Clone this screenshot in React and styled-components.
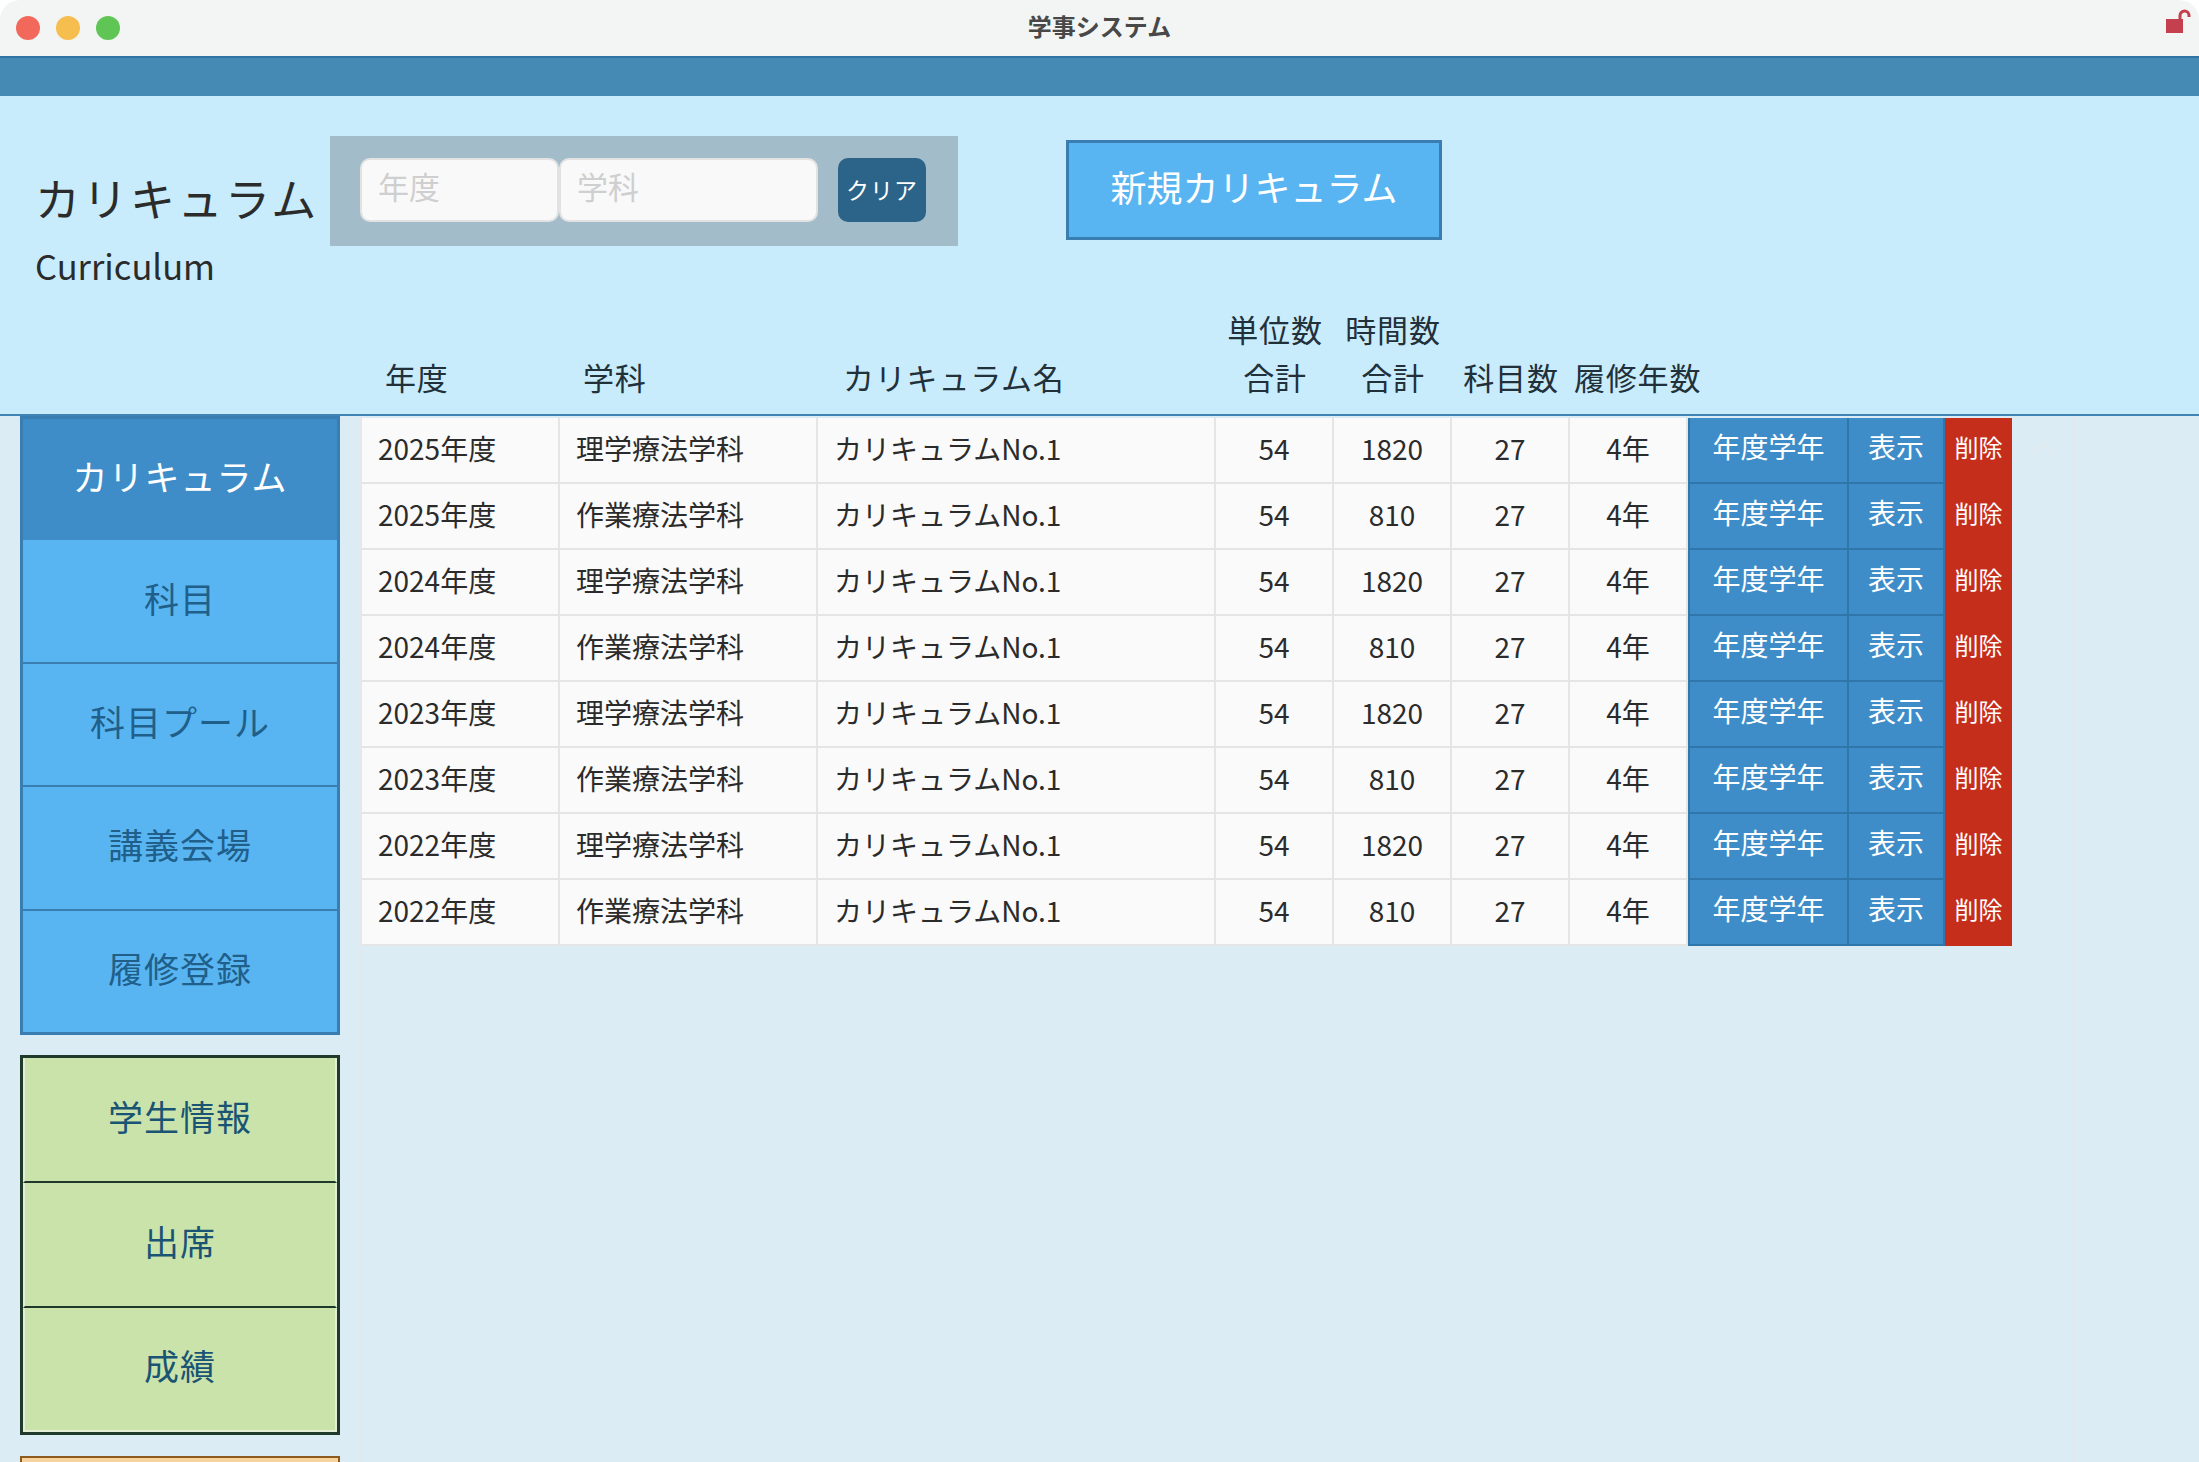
import React from 'react';
import styled, { createGlobalStyle } from 'styled-components';

const rows = [
  ['2025年度', '理学療法学科', 1820],
  ['2025年度', '作業療法学科', 810],
  ['2024年度', '理学療法学科', 1820],
  ['2024年度', '作業療法学科', 810],
  ['2023年度', '理学療法学科', 1820],
  ['2023年度', '作業療法学科', 810],
  ['2022年度', '理学療法学科', 1820],
  ['2022年度', '作業療法学科', 810],
];

const blueMenu = ['カリキュラム', '科目', '科目プール', '講義会場', '履修登録'];
const greenMenu = ['学生情報', '出席', '成績'];

const App = () => (
  <Window>
    <GlobalStyle />
    <TitleBar>
      <Lights>
        <Light $color="#f2695c" />
        <Light $color="#f6be4f" />
        <Light $color="#5fc554" />
      </Lights>
      <WindowTitle>学事システム</WindowTitle>
      <LockIcon viewBox="0 0 26 24" width="26" height="24">
        <rect x="0" y="10" width="17" height="14" fill="#c5404f" />
        <path d="M14 11V6.5a4.5 4.5 0 0 1 9 0V8" fill="none" stroke="#c5404f" strokeWidth="3" />
      </LockIcon>
    </TitleBar>
    <BlueBar />
    <Header>
      <TopRow>
        <TitleBlock>
          <PageTitle>カリキュラム</PageTitle>
          <PageSubtitle>Curriculum</PageSubtitle>
        </TitleBlock>
        <SearchPanel>
          <SearchInput $width={199} placeholder="年度" />
          <SearchInput $width={259} placeholder="学科" />
          <ClearButton>クリア</ClearButton>
        </SearchPanel>
        <NewButton>新規カリキュラム</NewButton>
      </TopRow>
      <HeadRow>
        <HeadCell $pad={23}>年度</HeadCell>
        <HeadCell $pad={23}>学科</HeadCell>
        <HeadCell $pad={25}>カリキュラム名</HeadCell>
        <HeadCell $center>単位数<br />合計</HeadCell>
        <HeadCell $center>時間数<br />合計</HeadCell>
        <HeadCell $center>科目数</HeadCell>
        <HeadCell $pad={4}>履修年数</HeadCell>
      </HeadRow>
    </Header>
    <Body>
      <Sidebar>
        <BlueGroup>
          {blueMenu.map((label, i) => (
            <BlueItem key={label} $active={i === 0}>{label}</BlueItem>
          ))}
        </BlueGroup>
        <GreenGroup>
          {greenMenu.map(label => (
            <GreenItem key={label}>{label}</GreenItem>
          ))}
        </GreenGroup>
        <OrangeGroup />
      </Sidebar>
      <Main>
        <ScrollTop viewBox="0 0 24 12" width="24" height="12">
          <path d="M1 11.5 12 1l11 10.5" fill="none" stroke="#e3ebef" strokeWidth="2" />
        </ScrollTop>
        {rows.map(([year, dept, hours], i) => (
          <Row key={i}>
            <Cell $pad>{year}</Cell>
            <Cell $pad>{dept}</Cell>
            <Cell $pad>カリキュラムNo.1</Cell>
            <Cell>54</Cell>
            <Cell>{hours}</Cell>
            <Cell>27</Cell>
            <Cell>4年</Cell>
            <ActionButton>年度学年</ActionButton>
            <ActionButton>表示</ActionButton>
            <DeleteButton>削除</DeleteButton>
          </Row>
        ))}
      </Main>
    </Body>
  </Window>
);
export default App;

const GlobalStyle = createGlobalStyle`
  html, body {
    margin: 0;
    padding: 0;
    background: #fff;
    font-family: "Noto Sans CJK JP", "Noto Sans", sans-serif;
  }
  * {
    box-sizing: border-box;
  }
`;

const Window = styled.div`
  height: 1462px;
  overflow: hidden;
  display: flex;
  flex-direction: column;
`;

const TitleBar = styled.div`
  height: 58px;
  flex: none;
  position: relative;
  display: flex;
  align-items: center;
  justify-content: center;
  background: #f3f5f4;
  border-bottom: 2px solid #2f74a5;
  border-radius: 20px 20px 0 0;
`;

const Lights = styled.div`
  position: absolute;
  left: 16px;
  top: 16px;
  display: flex;
  gap: 16px;
`;

const Light = styled.span`
  width: 24px;
  height: 24px;
  border-radius: 50%;
  background: ${({ $color }) => $color};
`;

const WindowTitle = styled.div`
  font-size: 24px;
  font-weight: 700;
  color: #484848;
  line-height: 54px;
  margin-bottom: 4px;
`;

const LockIcon = styled.svg`
  position: absolute;
  left: 2166px;
  top: 9px;
`;

const BlueBar = styled.div`
  height: 38px;
  flex: none;
  background: #4589b5;
`;

const Header = styled.header`
  height: 320px;
  flex: none;
  display: flex;
  flex-direction: column;
  background: #c8ecfc;
  border-bottom: 2px solid #3f84b5;
`;

const TopRow = styled.div`
  display: flex;
  align-items: flex-start;
  padding-top: 40px;
`;

const TitleBlock = styled.div`
  width: 330px;
  padding: 34px 0 0 35px;
  color: #2b2b2b;
`;

const PageTitle = styled.h1`
  margin: 0;
  font-size: 45px;
  font-weight: 400;
  letter-spacing: 2.5px;
  line-height: 56px;
  white-space: nowrap;
`;

const PageSubtitle = styled.div`
  margin-top: 14px;
  font-size: 34.5px;
  line-height: 50px;
`;

const SearchPanel = styled.div`
  width: 628px;
  height: 110px;
  display: flex;
  align-items: flex-start;
  padding: 22px 0 0 30px;
  background: #a2bcc9;
`;

const SearchInput = styled.input`
  width: ${({ $width }) => $width}px;
  height: 64px;
  padding: 0 16px 10px;
  font-family: inherit;
  font-size: 31px;
  background: #f9f9f9;
  border: 2px solid #e2e2e2;
  border-radius: 10px;
  outline: none;

  &::placeholder {
    color: #cfcfcf;
  }
`;

const ClearButton = styled.button`
  width: 88px;
  height: 64px;
  margin-left: 20px;
  padding: 0 0 3px;
  font-family: inherit;
  font-size: 23px;
  letter-spacing: 1px;
  color: #fff;
  background: #2c6389;
  border: none;
  border-radius: 10px;
`;

const NewButton = styled.button`
  width: 376px;
  height: 100px;
  margin: 4px 0 0 108px;
  padding: 0 0 9px;
  font-family: inherit;
  font-size: 36px;
  color: #fff;
  background: #59b5f1;
  border: 3px solid #3a7db0;
`;

const HeadRow = styled.div`
  display: grid;
  grid-template-columns: 198px 258px 398px 118px 118px 118px 118px;
  align-items: end;
  margin-top: auto;
  padding: 0 0 13px 362px;
  font-size: 31px;
  letter-spacing: 0.8px;
  line-height: 48px;
  color: #22303a;
`;

const HeadCell = styled.div`
  white-space: nowrap;
  padding-left: ${({ $pad }) => $pad || 0}px;
  text-align: ${({ $center }) => ($center ? 'center' : 'left')};
`;

const Body = styled.div`
  flex: 1;
  display: flex;
  background: #dcecf5;
`;

const Sidebar = styled.nav`
  width: 360px;
  flex: none;
  display: flex;
  flex-direction: column;
  padding: 0 20px;
`;

const BlueGroup = styled.div`
  height: 619px;
  flex: none;
  display: flex;
  flex-direction: column;
  border: 3px solid #3a7db0;
`;

const GreenGroup = styled.div`
  height: 380px;
  flex: none;
  display: flex;
  flex-direction: column;
  margin-top: 20px;
  border: 3px solid #1f3a2b;
`;

const BlueItem = styled.div`
  flex: 1;
  display: flex;
  align-items: center;
  justify-content: center;
  padding-bottom: 8px;
  font-size: 35px;
  letter-spacing: 1px;
  color: ${({ $active }) => ($active ? '#fff' : '#1f5f8a')};
  background: ${({ $active }) => ($active ? '#3f8dc8' : '#59b5f1')};
  border-bottom: ${({ $active }) => ($active ? 'none' : '2px solid #3a7db0')};

  &:last-child {
    border-bottom: none;
  }
`;

const GreenItem = styled.div`
  flex: 1;
  display: flex;
  align-items: center;
  justify-content: center;
  padding-bottom: 8px;
  font-size: 35px;
  letter-spacing: 1px;
  color: #1a5474;
  background: #c9e3aa;
  border: 2px solid #e3efd5;
  border-top: none;
  border-bottom: 2px solid #1f3a2b;

  &:first-child {
    padding-bottom: 9px;
  }

  &:last-child {
    border-bottom: 2px solid #e3efd5;
  }
`;

const OrangeGroup = styled.div`
  height: 60px;
  flex: none;
  margin-top: 21px;
  background: #f8d39e;
  border: 2px solid #8f5a1e;
`;

const Main = styled.main`
  width: 1715px;
  flex: none;
  position: relative;
  padding-top: 2px;
  border-left: 2px solid #e5e8ea;
  border-right: 2px solid #e5e8ea;
`;

const ScrollTop = styled.svg`
  position: absolute;
  left: 1668px;
  top: 26px;
`;

const Row = styled.div`
  display: grid;
  grid-template-columns: 198px 258px 398px 118px 118px 118px 118px 159px 98px 67px;
  width: max-content;
  height: 66px;
`;

const Cell = styled.div`
  display: flex;
  align-items: center;
  justify-content: ${({ $pad }) => ($pad ? 'flex-start' : 'center')};
  padding: 0 0 4px ${({ $pad }) => ($pad ? 16 : 0)}px;
  font-size: 28px;
  color: #2b2b2b;
  background: #fafafa;
  border-right: 2px solid #e5e5e5;
  border-bottom: 2px solid #e5e5e5;
`;

const ActionButton = styled.div`
  display: flex;
  align-items: center;
  justify-content: center;
  padding-bottom: 8px;
  font-size: 28px;
  color: #fff;
  background: #3f8dc8;
  border-left: 2px solid #2f77ab;
  border-bottom: 2px solid #2f77ab;

  & + & {
    border-right: 2px solid #2f77ab;
  }
`;

const DeleteButton = styled.div`
  display: flex;
  align-items: center;
  justify-content: center;
  padding-bottom: 9px;
  font-size: 24px;
  color: #fff;
  background: #c62e1c;
`;
